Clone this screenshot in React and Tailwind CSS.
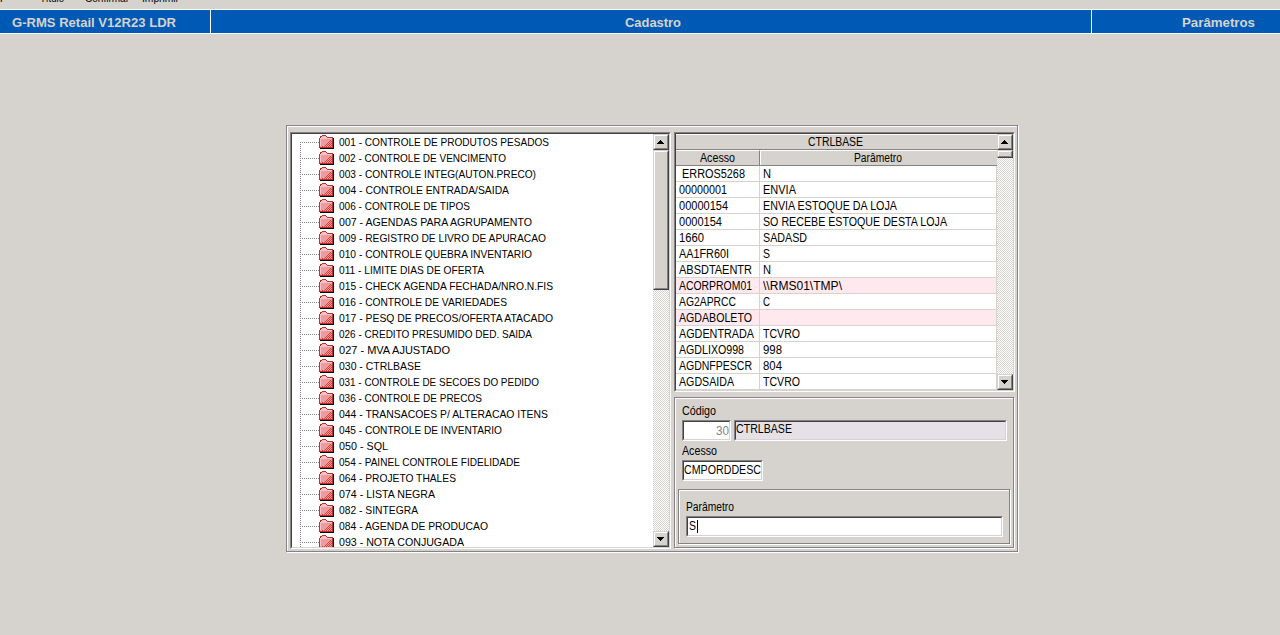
import React, { useLayoutEffect, useRef, useState } from "react";
import clsx from "clsx";

// [label, drawn width]
const TREE = [
  ["001 - CONTROLE DE PRODUTOS PESADOS", 210],
  ["002 - CONTROLE DE VENCIMENTO", 167],
  ["003 - CONTROLE INTEG(AUTON.PRECO)", 197],
  ["004 - CONTROLE ENTRADA/SAIDA", 170],
  ["006 - CONTROLE DE TIPOS", 131],
  ["007 - AGENDAS PARA AGRUPAMENTO", 193],
  ["009 - REGISTRO DE LIVRO DE APURACAO", 207],
  ["010 - CONTROLE QUEBRA INVENTARIO", 193],
  ["011 - LIMITE DIAS DE OFERTA", 145],
  ["015 - CHECK AGENDA FECHADA/NRO.N.FIS", 214],
  ["016 - CONTROLE DE VARIEDADES", 168],
  ["017 - PESQ DE PRECOS/OFERTA ATACADO", 214],
  ["026 - CREDITO PRESUMIDO DED. SAIDA", 193],
  ["027 - MVA AJUSTADO", 111],
  ["030 - CTRLBASE", 82],
  ["031 - CONTROLE DE SECOES DO PEDIDO", 200],
  ["036 - CONTROLE DE PRECOS", 143],
  ["044 - TRANSACOES P/ ALTERACAO ITENS", 209],
  ["045 - CONTROLE DE INVENTARIO", 163],
  ["050 - SQL", 49],
  ["054 - PAINEL CONTROLE FIDELIDADE", 181],
  ["064 - PROJETO THALES", 117],
  ["074 - LISTA NEGRA", 96],
  ["082 - SINTEGRA", 79],
  ["084 - AGENDA DE PRODUCAO", 149],
  ["093 - NOTA CONJUGADA", 125],
];

// [acesso, width, parametro, width]
const ROWS = [
  ["ERROS5268", 63, "N", 8],
  ["00000001", 48, "ENVIA", 33],
  ["00000154", 49, "ENVIA ESTOQUE DA LOJA", 134],
  ["0000154", 43, "SO RECEBE ESTOQUE DESTA LOJA", 184],
  ["1660", 25, "SADASD", 44],
  ["AA1FR60I", 50, "S", 7],
  ["ABSDTAENTR", 73, "N", 8],
  ["ACORPROM01", 73, "\\\\RMS01\\TMP\\", 79],
  ["AG2APRCC", 57, "C", 7],
  ["AGDABOLETO", 73, "", 0],
  ["AGDENTRADA", 75, "TCVRO", 37],
  ["AGDLIXO998", 65, "998", 19],
  ["AGDNFPESCR", 73, "804", 19],
  ["AGDSAIDA", 55, "TCVRO", 37],
];

// Squeezes a label to the width of the original bitmap font
function Fit({ w, className, children }) {
  const ref = useRef(null);
  const [scale, setScale] = useState(1);

  useLayoutEffect(() => {
    if (w && ref.current.offsetWidth) {
      const range = document.createRange();
      range.selectNodeContents(ref.current);
      setScale((s) => w / (range.getBoundingClientRect().width / s));
    }
  }, [w, children]);

  return (
    <span
      ref={ref}
      className={clsx("inline-block origin-left whitespace-pre", className)}
      style={{ transform: `scaleX(${scale})` }}
    >
      {children}
    </span>
  );
}

function Etched({ className, children }) {
  return (
    <div className={clsx("border border-[#848284] shadow-[1px_1px_0_#fff,inset_1px_1px_0_#fff]", className)}>
      {children}
    </div>
  );
}

function Sunken({ className, inner, children }) {
  return (
    <div className={clsx("border border-t-[#848284] border-l-[#848284] border-r-white border-b-white", className)}>
      <div
        className={clsx(
          "flex h-full w-full overflow-hidden border border-t-[#424142] border-l-[#424142] border-r-[#d6d3ce] border-b-[#d6d3ce]",
          inner
        )}
      >
        {children}
      </div>
    </div>
  );
}

function Raised({ className, children }) {
  return (
    <div className={clsx("w-4 shrink-0 border border-t-[#d6d3ce] border-l-[#d6d3ce] border-r-[#424142] border-b-[#424142]", className)}>
      <div className="flex h-full w-full items-center justify-center border border-t-white border-l-white border-r-[#848284] border-b-[#848284] bg-[#d6d3ce]">
        {children}
      </div>
    </div>
  );
}

function Arrow({ down }) {
  return (
    <svg width="7" height="4" shapeRendering="crispEdges" className={clsx("mr-px", down && "rotate-180")}>
      <path d="M3 0h1v1h1v1h1v1h1v1H0V3h1V2h1V1h1z" />
    </svg>
  );
}

function ScrollBar({ thumb }) {
  return (
    <div className="flex w-4 shrink-0 flex-col bg-[repeating-conic-gradient(#d6d3ce_0_25%,#fff_0_50%)] bg-[length:2px_2px]">
      <Raised className="h-4">
        <Arrow />
      </Raised>
      <Raised className={thumb} />
      <Raised className="mt-auto h-4">
        <Arrow down />
      </Raised>
    </div>
  );
}

function Folder() {
  return (
    <svg width="15" height="14" viewBox="0 0 15 14" shapeRendering="crispEdges" className="mr-px shrink-0">
      <path d="M3 1h5v1h1v1h6v11H1v-1h1z" fill="#000" />
      <path d="M3 0h4v1h1v1h6v11H0V3h1V1h2z" fill="#bd3031" />
      <path d="M1 3h12v9H1z" fill="#ef9a9c" />
      <path d="M3 1h4v1H3zM1 3h1V2h6v1h5v1H2v7H1z" fill="#f7c3c6" />
      <path
        d="M11 5h1v1h-1zM10 6h1v1h-1zM12 6h1v1h-1zM9 7h1v1H9zM11 7h1v1h-1zM8 8h1v1H8zM10 8h1v1h-1zM12 8h1v1h-1zM7 9h1v1H7zM9 9h1v1H9zM11 9h1v1h-1zM6 10h1v1H6zM8 10h1v1H8zM10 10h1v1h-1zM12 10h1v1h-1zM3 11h1v1H3zM5 11h1v1H5zM7 11h1v1H7zM9 11h1v1H9zM11 11h1v1h-1z"
        fill="#d64142"
      />
    </svg>
  );
}

function TreeRow({ label, w, first }) {
  return (
    <div className="flex h-4 shrink-0 items-center">
      <div
        className={clsx(
          "ml-2 w-px bg-[repeating-linear-gradient(#848284_0_1px,#fff_1px_2px)]",
          first ? "h-2 self-end" : "h-4"
        )}
      />
      <div className="mt-px h-px w-[18px] bg-[repeating-linear-gradient(90deg,#fff_0_1px,#848284_1px_2px)]" />
      <Folder />
      <Fit w={w} className="ml-1 text-[11px] leading-4">
        {label}
      </Fit>
    </div>
  );
}

export default function App() {
  return (
    <div className="flex h-[635px] w-[1280px] flex-col overflow-hidden bg-[#d6d3ce] font-['Liberation_Sans',Arial,sans-serif] text-xs text-black">
      {/* Menu */}
      <div className="h-[9px] shrink-0 overflow-hidden">
        <div className="-mt-[9px] flex h-4 text-[11px] leading-[14px]">
          <div className="w-10">r</div>
          <div className="w-[45px]">
            <Fit w={24}>Título</Fit>
          </div>
          <div className="w-[57px]">
            <Fit w={44}>Confirmar</Fit>
          </div>
          <Fit w={37}>Imprimir</Fit>
        </div>
      </div>

      {/* Title bar */}
      <div className="flex h-[25px] shrink-0 border-y border-white bg-[#005ab5] text-[13px] leading-[25px] font-bold text-[#d6d3ce]">
        <div className="w-[211px] border-r border-white pl-3">
          <Fit w={164}>G-RMS Retail V12R23 LDR</Fit>
        </div>
        <div className="w-[881px] border-r border-white pl-[414px]">
          <Fit w={56}>Cadastro</Fit>
        </div>
        <div className="pl-[90px]">
          <Fit w={73}>Parâmetros</Fit>
        </div>
      </div>

      {/* Main panel */}
      <Etched className="mt-[91px] ml-[286px] flex h-[427px] w-[732px] pt-[6px] pl-[3px]">
        <Sunken className="h-[417px] w-[381px] shrink-0" inner="bg-white">
          <div className="flex h-full flex-1 flex-col overflow-hidden">
            {TREE.map(([label, w], i) => (
              <TreeRow key={label} label={label} w={w} first={i === 0} />
            ))}
          </div>
          <ScrollBar thumb="h-[140px]" />
        </Sunken>

        <div className="ml-[3px] flex flex-col">
          <Sunken className="h-[260px] w-[341px]" inner="bg-white">
            <div className="w-[321px] shrink-0 leading-4">
              <div className="h-4 border-t border-b border-t-white border-b-[#848284] bg-[#d6d3ce] pl-[132px] leading-[15px]">
                <Fit w={55}>CTRLBASE</Fit>
              </div>
              <div className="flex h-4 border-b border-[#848284] bg-[#d6d3ce] leading-4">
                <div className="w-[84px] border-t border-r border-t-white border-r-[#848284] pl-6 leading-[15px]">
                  <Fit w={35}>Acesso</Fit>
                </div>
                <div className="flex-1 border-t border-l border-white pl-[93px] leading-[15px]">
                  <Fit w={48}>Parâmetro</Fit>
                </div>
              </div>
              {ROWS.map(([key, kw, value, vw], i) => (
                <div
                  key={key}
                  className={clsx("flex h-4 border-b border-[#d6d3ce]", i === 7 || i === 9 ? "bg-[#ffe9ee]" : "bg-white")}
                >
                  <div className={clsx("w-[84px] border-r border-[#d6d3ce]", i === 0 ? "pl-[6px]" : "pl-[3px]")}>
                    <Fit w={kw}>{key}</Fit>
                  </div>
                  <div className="flex-1 border-r border-[#d6d3ce] pl-[3px]">
                    <Fit w={vw}>{value}</Fit>
                  </div>
                </div>
              ))}
            </div>
            <ScrollBar thumb="h-2" />
          </Sunken>

          {/* Form */}
          <Etched className="mt-[5px] h-[151px] w-[340px] pt-[5px] pl-[3px]">
            <div className="ml-1 h-[17px] leading-4">
              <Fit w={34}>Código</Fit>
            </div>
            <div className="ml-1 flex gap-[3px]">
              <Sunken className="h-[21px] w-[49px]" inner="bg-white justify-end leading-[18px] text-[#848284]">
                <Fit w={13}>30</Fit>
              </Sunken>
              <Sunken className="h-[21px] w-[273px]" inner="bg-[#e6e1e6] leading-[14px]">
                <Fit w={56}>CTRLBASE</Fit>
              </Sunken>
            </div>
            <div className="mt-[2px] ml-1 h-[17px] leading-4">
              <Fit w={35}>Acesso</Fit>
            </div>
            <Sunken className="ml-1 h-[21px] w-[81px]" inner="bg-white leading-[17px]">
              <Fit w={77}>CMPORDDESC</Fit>
            </Sunken>
            <Etched className="mt-2 h-[55px] w-[332px] pt-[9px] pl-[7px]">
              <div className="h-[17px] leading-4">
                <Fit w={48}>Parâmetro</Fit>
              </div>
              <Sunken className="h-[21px] w-[317px]" inner="bg-white pl-px leading-[17px]">
                <Fit w={7}>S</Fit>
                <div className="mt-[2px] h-[13px] w-px bg-black" />
              </Sunken>
            </Etched>
          </Etched>
        </div>
      </Etched>
    </div>
  );
}
